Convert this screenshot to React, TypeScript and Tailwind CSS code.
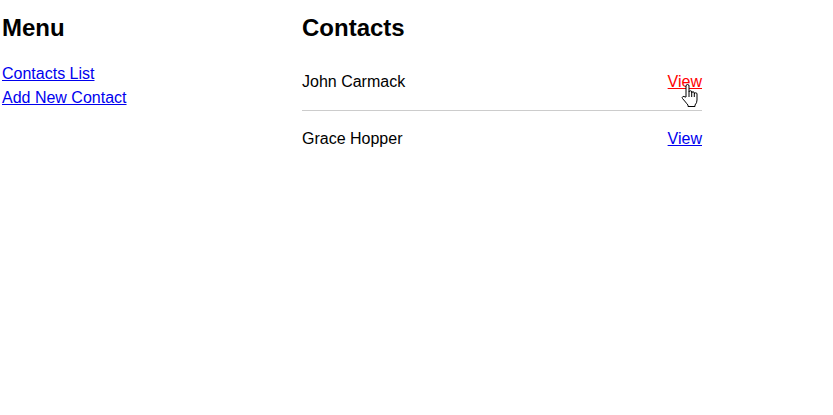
const contacts = [
  { id: 1, name: "John Carmack", hover: true },
  { id: 2, name: "Grace Hopper", hover: false },
];

function HandCursor() {
  return (
    <svg
      width="20"
      height="23"
      viewBox="0 0 20 23"
      className="absolute left-[10px] top-[14px] pointer-events-none"
    >
      <path
        d="M8 13 V2 Q8 0.5 9.5 0.5 Q11 0.5 11 2 V8 Q11 6.8 12.35 6.8 Q13.7 6.8 13.7 8 V9 Q13.7 7.8 15 7.8 Q16.3 7.8 16.3 9 V10 Q16.3 8.8 17.65 8.8 Q19 8.8 19 10 V16 Q19 19 17 21 V22.5 H10 V21 Q9 20 7.5 18 L4.5 14.5 Q3.7 13.3 4.8 12.6 Q6 12 7 13 Z"
        fill="#fff"
        stroke="#000"
        strokeWidth="1"
        strokeLinejoin="round"
      />
      <path d="M11 8 V13 M13.7 9 V13 M16.3 10 V13" stroke="#000" strokeWidth="1" />
    </svg>
  );
}

export default function App() {
  return (
    <div className="flex pl-[2px] text-black font-['Liberation_Sans',Arial,sans-serif]">
      {/* Sidebar */}
      <div className="w-[300px] shrink-0">
        <h2 className="mt-[12px] text-2xl leading-8 font-bold">Menu</h2>
        <ul className="mt-[18px] text-base leading-6">
          <li>
            <a href="#" className="text-[#0000ee] underline">
              Contacts List
            </a>
          </li>
          <li>
            <a href="#" className="text-[#0000ee] underline">
              Add New Contact
            </a>
          </li>
        </ul>
      </div>

      {/* Main */}
      <div className="w-[400px] shrink-0">
        <h2 className="mt-[12px] mb-[10px] text-2xl leading-8 font-bold">Contacts</h2>
        <ul>
          {contacts.map((c, i) => (
            <li
              key={c.id}
              className={
                "flex justify-between py-4 text-base leading-6 " +
                (i < contacts.length - 1 ? "border-b border-[#cccccc]" : "")
              }
            >
              <span>{c.name}</span>
              <span className="relative">
                <a
                  href="#"
                  className={c.hover ? "text-[#ff0000] underline" : "text-[#0000ee] underline"}
                >
                  View
                </a>
                {c.hover && <HandCursor />}
              </span>
            </li>
          ))}
        </ul>
      </div>
    </div>
  );
}
